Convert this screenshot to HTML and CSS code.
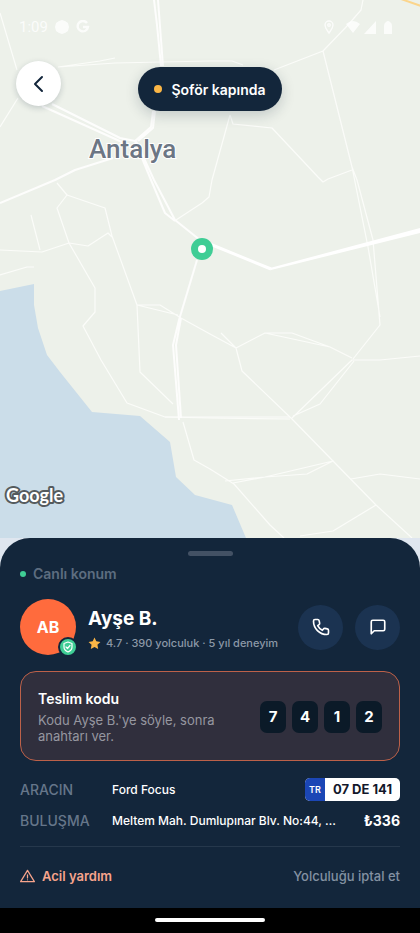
FILE: index.html
```html
<!DOCTYPE html>
<html lang="tr">
<head>
    <meta charset="UTF-8">
    <meta name="viewport" content="width=device-width, initial-scale=1.0">
    <title>Yolculuk - Şoför kapında</title>
    <link rel="stylesheet" href="styles.css">
</head>
<body>
    <main class="app">
        <section class="map">
            <svg class="map-canvas" viewBox="0 0 420 538" preserveAspectRatio="xMidYMid slice" role="img" aria-label="Antalya haritası">
                <rect width="420" height="538" fill="#edf1ea"/>
                <path d="M0 291L34 284V305L38 328L47 355L60 372L92 412L140 416L170 442L176 477L195 495L232 505L246 538H0Z" fill="#cbdde9"/>
                <!-- Yollar -->
                <g fill="none" stroke="#fbfcf9" stroke-width="1.2" stroke-linejoin="round">
                    <path d="M0 13L17 70M18 98L0 127M58 67L100 61L115 58M58 67L115 63L210 61H232L243 65"/>
                    <path d="M363 0L361 10L348 25L323 51L274 70M323 51L352 167L368 247L380 317M352 167L357 180L373 240L380 325L353 359"/>
                    <path d="M230 115L212 180L209 197L202 203L176 220M230 115L233 124L272 128L318 177L323 182L328 179L352 170"/>
                    <path d="M57 183L67 195L57 208L69 243L95 288V312L83 326L101 360L127 403L165 417H290"/>
                    <path d="M67 195L105 208L112 236L137 305L140 372L173 404M0 250L42 252L69 243L88 246L108 233L112 237M31 215L40 250M0 275L27 267H34"/>
                    <path d="M137 305H160L181 318L210 334L236 348L265 333H292L330 347L352 358M137 305L178 315M221 333L236 348M265 333L330 347M236 348L242 371L292 419"/>
                    <path d="M165 417L210 418L290 419M292 419L333 461L376 505L412 538M292 418L352 360L380 360L420 356M293 416L320 404L335 385L354 361"/>
                    <path d="M225 481L265 477L333 461L307 474L265 477L233 483M351 479L380 474L420 479M376 505L333 531L300 536"/>
                    <path d="M183 422L194 460L210 469L234 484L270 525L284 538"/>
                </g>
                <g fill="none" stroke="#fdfdfc" stroke-width="2" stroke-linejoin="round">
                    <path d="M154 0L157 25L161 66M158 0L163 66M153 111L151 127L135 141M155 111L153 128L138 141"/>
                    <path d="M42 106L133 147M52 104L120 138L135 141L151 180L165 213L175 221M136 141L154 180L175 220L200 240M113 158L75 170L55 180L0 203"/>
                    <path d="M197 260L179 320L173 345L179 420M181 318L176 345L181 418"/>
                </g>
                <path d="M200 240L271 269" fill="none" stroke="#fff" stroke-width="3"/>
                <path d="M270 268L271 270L420 233V228Z" fill="#fff"/>
                <path d="M401 -1L421 6" stroke="#fbd58c" stroke-width="2"/>
                <text class="city" x="89" y="158">Antalya</text>
                <circle cx="202" cy="249" r="11" fill="#3fcd95"/>
                <circle cx="202" cy="249" r="4" fill="#fff"/>
                <text class="map-brand" x="6" y="502">Google</text>
            </svg>

            <div class="status-bar">
                <div class="status-group">
                    <span>1:09</span>
                    <svg width="14" height="14" viewBox="0 0 14 14" fill="currentColor"><path d="M7 0L10 1L13 3L14 7L13 11L10 13L7 14L4 13L1 11L0 7L1 3L4 1Z"/></svg>
                    <svg width="14" height="14" viewBox="0 0 14 14" fill="none" stroke="currentColor" stroke-width="2.4"><path d="M11 3A5.2 5.2 0 1 0 12 7H7"/></svg>
                </div>
                <div class="status-group status-right">
                    <svg width="10" height="14" viewBox="0 0 10 14" fill="none" stroke="currentColor" stroke-width="1.4"><path d="M5 13C3 10 1 8 1 5a4 4 0 0 1 8 0c0 3-2 5-4 8z"/><circle cx="5" cy="5" r="1.3"/></svg>
                    <svg class="wifi" width="14" height="12" viewBox="0 0 14 12" fill="currentColor"><path d="M0 3Q7-3 14 3L7 12Z"/></svg>
                    <svg width="12" height="13" viewBox="0 0 12 13" fill="currentColor"><path d="M12 0V13H0Z"/></svg>
                    <svg class="battery" width="8" height="13" viewBox="0 0 8 13" fill="currentColor"><path d="M2 1Q4-1 6 1Q8 2 8 5V13H0V5Q0 2 2 1Z"/></svg>
                </div>
            </div>

            <div class="map-header">
                <button class="back-button" type="button" aria-label="Geri">
                    <svg width="24" height="24" viewBox="0 0 24 24" fill="none" stroke="currentColor" stroke-width="2" stroke-linecap="round" stroke-linejoin="round"><path d="M15 5l-7 7 7 7"/></svg>
                </button>
                <div class="trip-status"><span class="status-dot"></span>Şoför kapında</div>
            </div>
        </section>

        <section class="sheet">
            <div class="handle"></div>
            <div class="live"><span class="live-dot"></span>Canlı konum</div>

            <div class="driver">
                <div class="avatar">AB
                    <span class="verified">
                        <svg width="12" height="12" viewBox="0 0 24 24" fill="none" stroke="currentColor" stroke-width="2.4" stroke-linecap="round" stroke-linejoin="round"><path d="M12 2l8 3v7c0 5-3 8-8 10-5-2-8-5-8-10V5z"/><path d="M8 12l3 3 5-6"/></svg>
                    </span>
                </div>
                <div class="driver-info">
                    <h1>Ayşe B.</h1>
                    <p>
                        <svg width="13" height="13" viewBox="0 0 24 24" fill="#fbb646"><path d="M12 1l3.3 7 7.7 1-5.6 5.4 1.4 7.6L12 18.3 5.2 22l1.4-7.6L1 9l7.7-1z"/></svg>
                        4.7 · 390 yolculuk · 5 yıl deneyim
                    </p>
                </div>
                <div class="contact">
                    <button class="round-button" type="button" aria-label="Ara">
                        <svg width="18" height="18" viewBox="0 0 24 24" fill="none" stroke="currentColor" stroke-width="2.2" stroke-linecap="round" stroke-linejoin="round"><path d="M22 17.5v2.500a2 2 0 0 1-2 2C10 22 2 14 2 4a2 2 0 0 1 2-2h3.500a2 2 0 0 1 2 1.600l.7 3.200a2 2 0 0 1-.8 2L7.600 10.200a14 14 0 0 0 6.200 6.200l1.400-1.800a2 2 0 0 1 2-.8l3.200.7a2 2 0 0 1 1.600 2z"/></svg>
                    </button>
                    <button class="round-button" type="button" aria-label="Mesaj gönder">
                        <svg width="18" height="18" viewBox="0 0 24 24" fill="none" stroke="currentColor" stroke-width="2.2" stroke-linecap="round" stroke-linejoin="round"><path d="M21 15a2 2 0 0 1-2 2H7l-4 4V5a2 2 0 0 1 2-2h14a2 2 0 0 1 2 2z"/></svg>
                    </button>
                </div>
            </div>

            <div class="code-card">
                <div class="code-text">
                    <h2>Teslim kodu</h2>
                    <p>Kodu Ayşe B.'ye söyle, sonra anahtarı ver.</p>
                </div>
                <div class="digits">
                    <span>7</span><span>4</span><span>1</span><span>2</span>
                </div>
            </div>

            <div class="details">
                <div class="detail-row">
                    <span class="label">ARACIN</span>
                    <span class="value">Ford Focus</span>
                    <span class="plate"><span class="plate-country">TR</span><span class="plate-number">07 DE 141</span></span>
                </div>
                <div class="detail-row">
                    <span class="label">BULUŞMA</span>
                    <span class="value">Meltem Mah. Dumlupınar Blv. No:44, …</span>
                    <span class="price">₺336</span>
                </div>
            </div>

            <div class="actions">
                <button class="help" type="button">
                    <svg width="15" height="14" viewBox="0 0 24 22" fill="none" stroke="currentColor" stroke-width="2" stroke-linejoin="round" stroke-linecap="round"><path d="M12 2L23 20H1zM12 9v5M12 17v.1"/></svg>
                    Acil yardım
                </button>
                <button class="cancel" type="button">Yolculuğu iptal et</button>
            </div>
        </section>

        <div class="system-nav"><span></span></div>
    </main>
</body>
</html>
```
FILE: styles.css
```css
* {
    box-sizing: border-box;
}

body {
    margin: 0;
    font-family: Inter, "Noto Sans", sans-serif;
    background-color: #dfe6ef;
    color: white;
}

h1, h2, p {
    margin: 0;
}

button {
    border: none;
    padding: 0;
    background: none;
    font: inherit;
    color: inherit;
    cursor: pointer;
}

svg {
    display: block;
    flex-shrink: 0;
}

.app {
    min-height: 100vh;
    display: flex;
    flex-direction: column;
}

/* Map */
.map {
    position: relative;
    flex: 1;
    min-height: 320px;
}

.map-canvas {
    position: absolute;
    inset: 0;
    width: 100%;
    height: 100%;
}

.city {
    font-family: Roboto, sans-serif;
    font-size: 26px;
    font-weight: 500;
    fill: #6c7684;
    stroke: white;
    stroke-width: 2px;
    paint-order: stroke;
}

.map-brand {
    font-family: Lato, sans-serif;
    font-size: 18px;
    font-weight: 700;
    fill: white;
    stroke: #555b5e;
    stroke-width: 4px;
    stroke-linejoin: round;
    paint-order: stroke;
}

.status-bar {
    position: relative;
    display: flex;
    justify-content: space-between;
    padding: 17px 28px 0 19px;
    font-family: Roboto, sans-serif;
    font-size: 15px;
    line-height: 20px;
    opacity: 0.8;
}

.status-group {
    display: flex;
    align-items: center;
    gap: 7px;
}

.status-right {
    gap: 4px;
}

.wifi {
    margin-left: 8px;
}

.battery {
    margin-left: 4px;
}

.map-header {
    position: relative;
    display: grid;
    grid-template-columns: 1fr auto 1fr;
    align-items: start;
    padding: 24px 16px 0;
}

.back-button {
    width: 45px;
    height: 45px;
    border-radius: 50%;
    background-color: white;
    color: #13263b;
    display: flex;
    align-items: center;
    justify-content: center;
    box-shadow: 0 2px 6px rgba(19, 38, 59, 0.2);
}

.trip-status {
    display: flex;
    align-items: center;
    gap: 9px;
    height: 44px;
    margin-top: 6px;
    padding: 0 16px;
    border-radius: 22px;
    background-color: #13263b;
    font-size: 14px;
    font-weight: 600;
    box-shadow: 0 4px 14px rgba(19, 38, 59, 0.2);
}

.status-dot {
    width: 8px;
    height: 8px;
    border-radius: 50%;
    background-color: #fbb646;
}

/* Bottom sheet */
.sheet {
    padding: 13px 20px 0;
    border-radius: 30px 30px 0 0;
    background-color: #13263b;
}

.handle {
    width: 45px;
    height: 5px;
    margin: 0 auto;
    border-radius: 3px;
    background-color: #435164;
}

.live {
    display: flex;
    align-items: center;
    gap: 7px;
    margin-top: 8px;
    font-size: 14px;
    font-weight: 600;
    line-height: 20px;
    color: #5d6d80;
}

.live-dot {
    width: 6px;
    height: 6px;
    border-radius: 50%;
    background-color: #3fcd95;
}

.driver {
    display: flex;
    align-items: center;
    gap: 12px;
    margin-top: 15px;
}

.avatar {
    position: relative;
    flex-shrink: 0;
    display: flex;
    align-items: center;
    justify-content: center;
    width: 56px;
    height: 56px;
    border-radius: 50%;
    background-color: #ff6b3d;
    font-size: 16px;
    font-weight: 700;
}

.verified {
    position: absolute;
    right: -2px;
    bottom: -2px;
    display: flex;
    align-items: center;
    justify-content: center;
    width: 20px;
    height: 20px;
    border: 2px solid #13263b;
    border-radius: 50%;
    background-color: #3fcd95;
}

.driver-info {
    flex: 1;
    min-width: 0;
    padding-top: 5px;
}

.driver-info h1 {
    font-size: 19px;
    font-weight: 700;
    line-height: 24px;
}

.driver-info p {
    display: flex;
    align-items: center;
    gap: 5px;
    margin-top: 3px;
    font-size: 11px;
    font-weight: 500;
    line-height: 18px;
    white-space: nowrap;
    color: #8c98a7;
}

.contact {
    display: flex;
    gap: 12px;
}

.round-button {
    display: flex;
    align-items: center;
    justify-content: center;
    width: 45px;
    height: 45px;
    border-radius: 50%;
    background-color: #1b3351;
}

.code-card {
    display: flex;
    align-items: center;
    justify-content: space-between;
    gap: 16px;
    margin-top: 16px;
    padding: 17px 17px 16px;
    border: 1px solid #bd6149;
    border-radius: 16px;
    background-color: #302f3d;
}

.code-text {
    max-width: 200px;
}

.code-text h2 {
    margin-bottom: 3px;
    font-size: 14px;
    font-weight: 600;
    line-height: 20px;
}

.code-text p {
    font-size: 13px;
    line-height: 16px;
    color: #9697a0;
}

.digits {
    display: flex;
    gap: 6px;
}

.digits span {
    width: 26px;
    border-radius: 7px;
    background-color: #0b1a28;
    font-size: 15px;
    font-weight: 700;
    line-height: 32px;
    text-align: center;
}

.details {
    padding: 13px 0 10px;
    border-bottom: 1px solid #26384c;
}

.detail-row {
    display: grid;
    grid-template-columns: 80px 1fr auto;
    align-items: center;
    gap: 12px;
    min-height: 31px;
    font-size: 13px;
    line-height: 20px;
}

.label {
    font-size: 14px;
    font-weight: 500;
    color: #66768a;
}

.value {
    overflow: hidden;
    text-overflow: ellipsis;
    white-space: nowrap;
    font-size: 12px;
    font-weight: 500;
}

.plate {
    display: flex;
    overflow: hidden;
    border-radius: 5px;
    background-color: white;
    line-height: 23px;
}

.plate-country {
    width: 20px;
    background-color: #1b46b5;
    font-size: 9px;
    font-weight: 600;
    text-align: center;
}

.plate-number {
    padding: 0 8px;
    color: #13182b;
    font-weight: 700;
}

.price {
    font-size: 14px;
    font-weight: 700;
}

.actions {
    display: flex;
    justify-content: space-between;
    align-items: center;
    padding: 19px 0 22px;
    font-size: 13px;
    font-weight: 500;
    line-height: 20px;
}

.help {
    display: flex;
    align-items: center;
    gap: 7px;
    color: #f7a48c;
    font-weight: 600;
}

.cancel {
    color: #8391a2;
}

.system-nav {
    display: flex;
    justify-content: center;
    padding: 10px 0 11px;
    background-color: black;
}

.system-nav span {
    width: 110px;
    height: 4px;
    border-radius: 2px;
    background-color: white;
}
```
